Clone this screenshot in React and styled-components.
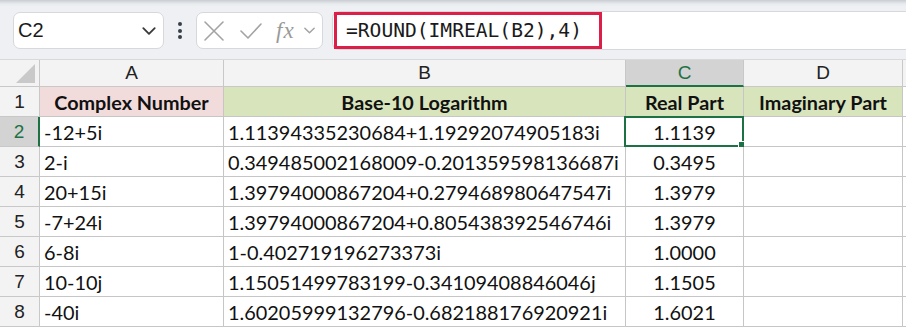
import React from 'react'
import styled, { createGlobalStyle } from 'styled-components'

const GlobalStyle = createGlobalStyle`
  html, body { margin: 0; padding: 0; background: #ffffff; }
  body { width: 906px; height: 328px; overflow: hidden; }
`

const GREEN = '#1e7145'
const CELL_FONT = `Lato, "Open Sans", sans-serif`

const Sheet = styled.div`
  width: 906px;
  height: 328px;
  overflow: hidden;
  display: flex;
  flex-direction: column;
  background: #fff;
`

const Toolbar = styled.div`
  height: 60px;
  flex: none;
  display: flex;
  align-items: center;
  padding: 2px 0 0 13px;
  box-sizing: border-box;
  background: linear-gradient(#c9cdd2 0, #e9ecef 4px, #eef0f3 7px, #eef0f3 100%);
  border-bottom: 1px solid #d9d9d9;
`

const NameBox = styled.div`
  width: 151px;
  height: 37px;
  box-sizing: border-box;
  background: #fff;
  border: 1px solid #d6d8db;
  border-radius: 7px;
  display: flex;
  align-items: center;
  justify-content: space-between;
  padding: 0 6px 0 4px;
  font-family: "Liberation Sans", Arial, sans-serif;
  font-size: 20px;
  color: #1a1a1a;
`

const Dots = styled.div`
  width: 32px;
  display: flex;
  flex-direction: column;
  align-items: center;
  gap: 2.5px;
  span {
    width: 4px;
    height: 4px;
    border-radius: 50%;
    background: #36404a;
  }
`

const FuncBox = styled.div`
  width: 127px;
  height: 37px;
  box-sizing: border-box;
  background: #fff;
  border: 1px solid #d6d8db;
  border-radius: 7px;
  display: flex;
  align-items: center;
  padding: 0 0 0 5px;
  gap: 13px;
`

const Fx = styled.span`
  font-family: "Liberation Serif", "Times New Roman", serif;
  font-style: italic;
  font-size: 23px;
  color: #9a9a9a;
  letter-spacing: 1px;
  display: flex;
  align-items: center;
  gap: 8px;
`

const FormulaBar = styled.div`
  flex: 1;
  margin-left: 9px;
  height: 39px;
  background: #fff;
  border: 1px solid #d6d8db;
  border-right: none;
  border-radius: 7px 0 0 7px;
  display: flex;
  align-items: center;
  box-sizing: border-box;
`

const Highlight = styled.div`
  margin-left: 1px;
  height: 37px;
  width: 268px;
  box-sizing: border-box;
  border: 3px solid #dc1f48;
  display: flex;
  align-items: center;
  padding-left: 9px;
  font-family: "DejaVu Sans Mono", "Liberation Mono", monospace;
  font-size: 19.6px;
  color: #1a1a1a;
`

const Grid = styled.div`
  display: grid;
  grid-template-columns: 40px 184px 402px 118px 159px 1fr;
  grid-template-rows: 27px repeat(8, 30px);
  font-family: ${CELL_FONT};
  font-size: 19.9px;
  color: #111;
`

const ColHead = styled.div`
  background: ${p => (p.$active ? '#d3d3d3' : '#f3f3f3')};
  color: ${p => (p.$active ? GREEN : '#222')};
  border-right: 1px solid #c8c8c8;
  border-bottom: ${p => (p.$active ? `2px solid ${GREEN}` : '1px solid #c8c8c8')};
  display: flex;
  align-items: center;
  justify-content: center;
  font-family: "Liberation Sans", Arial, sans-serif;
  font-size: 19px;
  box-sizing: border-box;
  position: relative;
`

const Corner = styled.div`
  width: 0;
  height: 0;
  position: absolute;
  right: 4px;
  bottom: 3px;
  border-left: 19px solid transparent;
  border-bottom: 19px solid #c9c9c9;
`

const RowHead = styled.div`
  background: ${p => (p.$active ? '#d3d3d3' : '#f3f3f3')};
  color: ${p => (p.$active ? GREEN : '#222')};
  border-right: ${p => (p.$active ? `2px solid ${GREEN}` : '1px solid #c8c8c8')};
  border-bottom: 1px solid #c8c8c8;
  display: flex;
  align-items: center;
  justify-content: center;
  font-family: "Liberation Sans", Arial, sans-serif;
  font-size: 19px;
  box-sizing: border-box;
`

const Cell = styled.div`
  background: ${p => p.$bg || '#fff'};
  border-right: 1px solid #c6c6c6;
  border-bottom: 1px solid #c6c6c6;
  display: flex;
  align-items: center;
  justify-content: ${p => (p.$align === 'center' ? 'center' : 'flex-start')};
  padding: 1px 0 0 ${p => (p.$align === 'center' ? '0' : '4px')};
  font-weight: ${p => (p.$bold ? 700 : 400)};
  font-size: ${p => (p.$bold ? '19.8px' : 'inherit')};
  box-sizing: border-box;
  white-space: nowrap;
  overflow: visible;
  position: relative;
`

const Selection = styled.div`
  position: absolute;
  left: -2px;
  top: -1px;
  right: -1px;
  bottom: -1px;
  border: 2px solid ${GREEN};
  pointer-events: none;
`

const Handle = styled.div`
  position: absolute;
  right: -5px;
  bottom: -5px;
  width: 7px;
  height: 7px;
  background: ${GREEN};
  border: 1px solid #fff;
`

const Chevron = ({ size = 14, color = '#3a3a3a' }) => (
  <svg width={size} height={size} viewBox="0 0 14 14" fill="none">
    <polyline points="2,4.5 7,9.5 12,4.5" stroke={color} strokeWidth="1.6" strokeLinecap="round" strokeLinejoin="round" />
  </svg>
)

const rows = [
  ['-12+5i', '1.11394335230684+1.19292074905183i', '1.1139'],
  ['2-i', '0.349485002168009-0.201359598136687i', '0.3495'],
  ['20+15i', '1.39794000867204+0.279468980647547i', '1.3979'],
  ['-7+24i', '1.39794000867204+0.805438392546746i', '1.3979'],
  ['6-8i', '1-0.402719196273373i', '1.0000'],
  ['10-10j', '1.15051499783199-0.34109408846046j', '1.1505'],
  ['-40i', '1.60205999132796-0.682188176920921i', '1.6021'],
]

const PINK = '#f2dcdb'
const OLIVE = '#d8e4bc'

export default function App() {
  return (
    <Sheet>
      <GlobalStyle />
      <Toolbar>
        <NameBox>
          <span>C2</span>
          <Chevron size={16} />
        </NameBox>
        <Dots>
          <span />
          <span />
          <span />
        </Dots>
        <FuncBox>
          <svg width="24" height="24" viewBox="0 0 24 24">
            <path d="M3 3 L21 21 M21 3 L3 21" stroke="#a3a3a3" strokeWidth="1.6" strokeLinecap="round" />
          </svg>
          <svg width="24" height="22" viewBox="0 0 24 22">
            <polyline points="2,11 9,18 22,4" fill="none" stroke="#a3a3a3" strokeWidth="1.6" strokeLinecap="round" strokeLinejoin="round" />
          </svg>
          <Fx>
            fx
            <Chevron size={13} color="#a3a3a3" />
          </Fx>
        </FuncBox>
        <FormulaBar>
          <Highlight>=ROUND(IMREAL(B2),4)</Highlight>
        </FormulaBar>
      </Toolbar>
      <Grid>
        <ColHead>
          <Corner />
        </ColHead>
        <ColHead>A</ColHead>
        <ColHead>B</ColHead>
        <ColHead $active>C</ColHead>
        <ColHead>D</ColHead>
        <ColHead />

        <RowHead>1</RowHead>
        <Cell $bg={PINK} $bold $align="center">Complex Number</Cell>
        <Cell $bg={OLIVE} $bold $align="center">Base-10 Logarithm</Cell>
        <Cell $bg={OLIVE} $bold $align="center">Real Part</Cell>
        <Cell $bg={OLIVE} $bold $align="center">Imaginary Part</Cell>
        <Cell />

        {rows.map((r, i) => (
          <React.Fragment key={i}>
            <RowHead $active={i === 0}>{i + 2}</RowHead>
            <Cell>{r[0]}</Cell>
            <Cell>{r[1]}</Cell>
            <Cell $align="center">
              {r[2]}
              {i === 0 && (
                <Selection>
                  <Handle />
                </Selection>
              )}
            </Cell>
            <Cell />
            <Cell />
          </React.Fragment>
        ))}
      </Grid>
    </Sheet>
  )
}
